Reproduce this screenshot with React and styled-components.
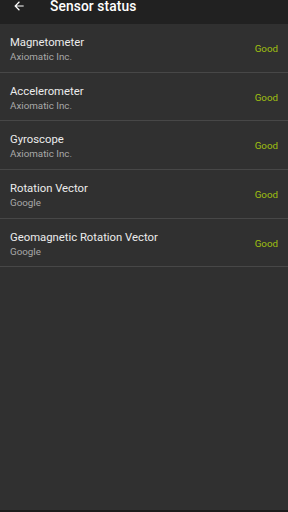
import styled, { createGlobalStyle } from "styled-components";

const GlobalStyle = createGlobalStyle`
  html, body {
    margin: 0;
    padding: 0;
    background: #303030;
  }
  body {
    font-family: Roboto, "Noto Sans", sans-serif;
  }
`;

const Page = styled.div`
  width: 288px;
  height: 512px;
  display: flex;
  flex-direction: column;
  background: #303030;
  overflow: hidden;
`;

const Header = styled.div`
  height: 24px;
  flex: none;
  overflow: hidden;
  background: #212121;
`;

const HeaderInner = styled.div`
  height: 45px;
  margin-top: -17px;
  display: flex;
  align-items: center;
  padding-left: 12px;
  gap: 24px;
`;

const BackButton = styled.div`
  width: 14px;
  height: 14px;
  display: flex;
  color: #ffffff;
`;

const Title = styled.div`
  color: #ffffff;
  font-size: 13.8px;
  font-weight: 500;
  letter-spacing: 0.1px;
`;

const List = styled.div`
  flex: 1;
  display: flex;
  flex-direction: column;
`;

const Row = styled.div`
  height: 48.7px;
  box-sizing: border-box;
  border-bottom: 1px solid #474747;
  display: flex;
  align-items: center;
  justify-content: space-between;
  padding: 0 10px 0 10px;
`;

const Info = styled.div`
  display: flex;
  flex-direction: column;
  gap: 1px;
  margin-top: 3px;
`;

const Name = styled.div`
  color: #ececec;
  font-size: 11.3px;
  line-height: 14px;
`;

const Vendor = styled.div`
  color: #a8a8a8;
  font-size: 9.8px;
  line-height: 12px;
`;

const Status = styled.div`
  color: ${(p) => (p.good ? "#a0c010" : "#e05050")};
  font-size: 9.8px;
  margin-top: 1px;
`;

const Footer = styled.div`
  height: 2px;
  flex: none;
  background: #1c1c1c;
`;

const sensors = [
  { name: "Magnetometer", vendor: "Axiomatic Inc." },
  { name: "Accelerometer", vendor: "Axiomatic Inc." },
  { name: "Gyroscope", vendor: "Axiomatic Inc." },
  { name: "Rotation Vector", vendor: "Google" },
  { name: "Geomagnetic Rotation Vector", vendor: "Google" },
];

export default function App() {
  return (
    <Page>
      <GlobalStyle />
      <Header>
        <HeaderInner>
          <BackButton>
            <svg width="14" height="14" viewBox="0 0 24 24">
              <path
                d="M20 11H7.83l5.59-5.59L12 4l-8 8 8 8 1.41-1.41L7.83 13H20v-2z"
                fill="currentColor"
              />
            </svg>
          </BackButton>
          <Title>Sensor status</Title>
        </HeaderInner>
      </Header>
      <List>
        {sensors.map((s) => (
          <Row key={s.name}>
            <Info>
              <Name>{s.name}</Name>
              <Vendor>{s.vendor}</Vendor>
            </Info>
            <Status good>Good</Status>
          </Row>
        ))}
      </List>
      <Footer />
    </Page>
  );
}
